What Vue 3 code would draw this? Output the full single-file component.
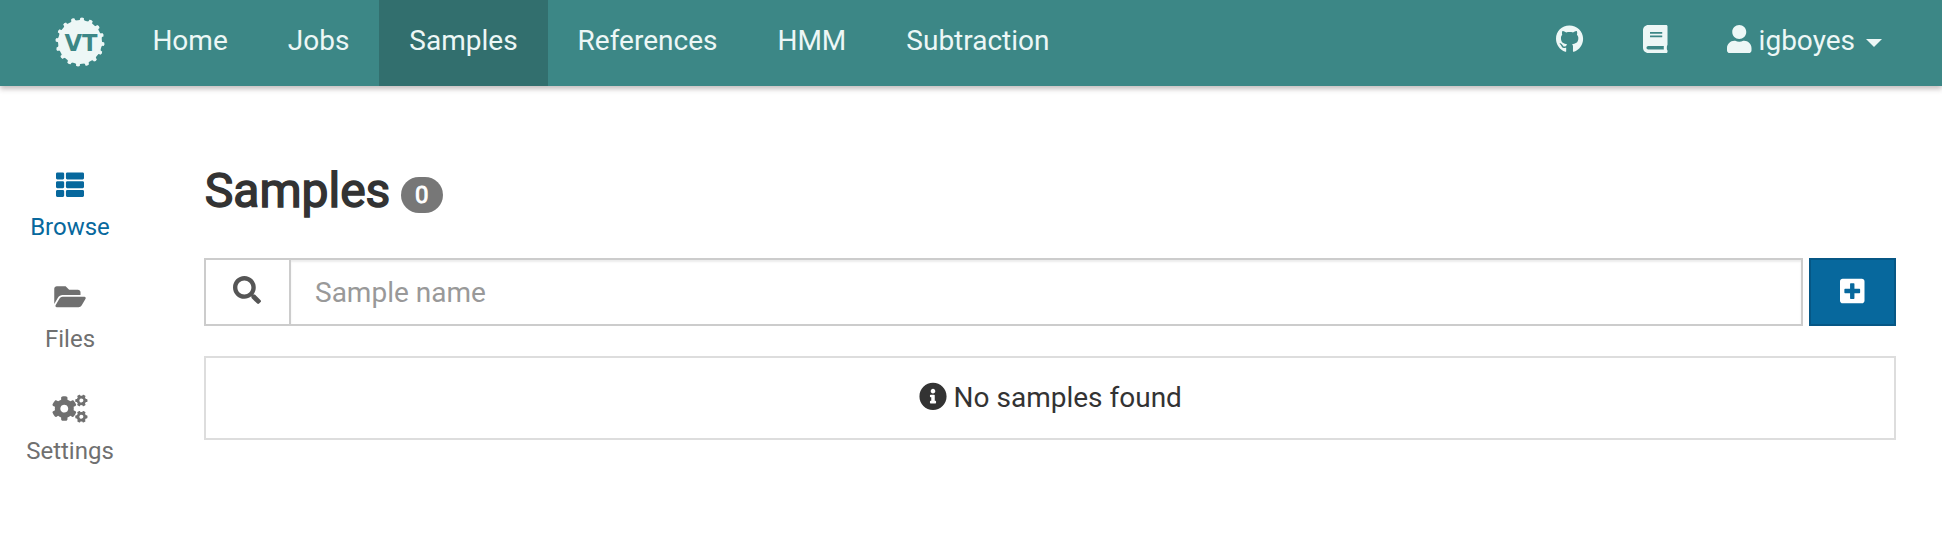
<script setup>
const icons = {
  github: { w: 496, d: ['M165.9 397.4c0 2-2.3 3.6-5.2 3.6-3.3.3-5.6-1.3-5.6-3.6 0-2 2.3-3.6 5.2-3.6 3-.3 5.6 1.3 5.6 3.6zm-31.1-4.5c-.7 2 1.3 4.3 4.3 4.9 2.6 1 5.6 0 6.2-2s-1.3-4.3-4.3-5.2c-2.6-.7-5.5.3-6.2 2.3zm44.2-1.7c-2.9.7-4.9 2.6-4.6 4.9.3 2 2.9 3.3 5.9 2.6 2.9-.7 4.9-2.6 4.6-4.6-.3-1.9-3-3.2-5.9-2.9zM244.8 8C106.1 8 0 113.3 0 252c0 110.9 69.8 205.8 169.5 239.2 12.8 2.3 17.3-5.6 17.3-12.1 0-6.2-.3-40.4-.3-61.4 0 0-70 15-84.7-29.8 0 0-11.4-29.1-27.8-36.6 0 0-22.9-15.7 1.6-15.4 0 0 24.9 2 38.6 25.8 21.9 38.6 58.6 27.5 72.9 20.9 2.3-16 8.8-27.1 16-33.7-55.9-6.2-112.3-14.3-112.3-110.5 0-27.5 7.6-41.3 23.6-58.9-2.6-6.5-11.1-33.3 2.6-67.9 20.9-6.5 69 27 69 27 20-5.6 41.5-8.5 62.8-8.5s42.8 2.9 62.8 8.5c0 0 48.1-33.6 69-27 13.7 34.7 5.2 61.4 2.6 67.9 16 17.7 25.8 31.5 25.8 58.9 0 96.5-58.9 104.2-114.8 110.5 9.2 7.9 17 22.9 17 46.4 0 33.7-.3 75.4-.3 83.6 0 6.5 4.6 14.4 17.3 12.1C428.2 457.8 496 362.9 496 252 496 113.3 383.5 8 244.8 8z'] },
  book: { w: 448, d: ['M448 360V24c0-13.3-10.7-24-24-24H96C43 0 0 43 0 96v320c0 53 43 96 96 96h328c13.3 0 24-10.7 24-24v-16c0-7.5-3.5-14.3-8.9-18.7-4.2-15.4-4.2-59.3 0-74.7 5.4-4.3 8.9-11.1 8.9-18.6zM128 134c0-3.3 2.7-6 6-6h212c3.3 0 6 2.7 6 6v20c0 3.3-2.7 6-6 6H134c-3.3 0-6-2.7-6-6v-20zm0 64c0-3.3 2.7-6 6-6h212c3.3 0 6 2.7 6 6v20c0 3.3-2.7 6-6 6H134c-3.3 0-6-2.7-6-6v-20zm253.4 250H96c-17.7 0-32-14.3-32-32 0-17.6 14.4-32 32-32h285.4c-1.9 17.1-1.9 46.9 0 64z'] },
  user: { w: 448, d: ['M224 256c70.7 0 128-57.3 128-128S294.7 0 224 0 96 57.3 96 128s57.3 128 128 128zm89.6 32h-16.7c-22.2 10.2-46.9 16-72.9 16s-50.6-5.8-72.9-16h-16.7C60.2 288 0 348.2 0 422.4V464c0 26.5 21.5 48 48 48h352c26.5 0 48-21.5 48-48v-41.6c0-74.2-60.2-134.4-134.4-134.4z'] },
  list: { w: 512, d: ['M149.333 216v80c0 13.255-10.745 24-24 24H24c-13.255 0-24-10.745-24-24v-80c0-13.255 10.745-24 24-24h101.333c13.255 0 24 10.745 24 24zM0 376v80c0 13.255 10.745 24 24 24h101.333c13.255 0 24-10.745 24-24v-80c0-13.255-10.745-24-24-24H24c-13.255 0-24 10.745-24 24zM125.333 32H24C10.745 32 0 42.745 0 56v80c0 13.255 10.745 24 24 24h101.333c13.255 0 24-10.745 24-24V56c0-13.255-10.745-24-24-24zm80 448H488c13.255 0 24-10.745 24-24v-80c0-13.255-10.745-24-24-24H205.333c-13.255 0-24 10.745-24 24v80c0 13.255 10.745 24 24 24zm-24-424v80c0 13.255 10.745 24 24 24H488c13.255 0 24-10.745 24-24V56c0-13.255-10.745-24-24-24H205.333c-13.255 0-24 10.745-24 24zm24 264H488c13.255 0 24-10.745 24-24v-80c0-13.255-10.745-24-24-24H205.333c-13.255 0-24 10.745-24 24v80c0 13.255 10.745 24 24 24z'] },
  folder: { w: 576, d: ['M572.694 292.093L500.27 416.248A63.997 63.997 0 0 1 444.989 448H45.025c-18.523 0-30.064-20.093-20.731-36.093l72.424-124.155A64 64 0 0 1 152 256h399.964c18.523 0 30.064 20.093 20.73 36.093zM152 224h328v-48c0-26.51-21.49-48-48-48H272l-64-64H48C21.49 64 0 85.49 0 112v278.046l69.077-118.418C86.214 242.25 117.989 224 152 224z'] },
  cogs: { w: 640, d: [
    'M386.3 286.1l33.7 16.8c10.1 5.8 14.5 18.1 10.5 29.1-8.9 24.2-26.4 46.4-42.6 65.8-7.4 8.9-20.2 11.1-30.3 5.3l-29.1-16.8c-16 13.7-34.6 24.6-54.9 31.7v33.6c0 11.6-8.3 21.6-19.7 23.6-24.6 4.2-50.4 4.4-75.9 0-11.5-2-20-11.9-20-23.6V418c-20.3-7.2-38.9-18-54.9-31.7L74 403c-10 5.8-22.9 3.6-30.3-5.3-16.2-19.4-33.3-41.6-42.2-65.7-4-10.9.4-23.2 10.5-29.1l33.3-16.8c-3.9-20.9-3.9-42.4 0-63.4L12 205.8c-10.1-5.8-14.6-18.1-10.5-29 8.9-24.2 26-46.4 42.2-65.8 7.4-8.9 20.2-11.1 30.3-5.3l29.1 16.8c16-13.7 34.6-24.6 54.9-31.7V57.1c0-11.5 8.2-21.5 19.6-23.5 24.6-4.2 50.5-4.4 76-.1 11.5 2 20 11.9 20 23.6v33.6c20.3 7.2 38.9 18 54.9 31.7l29.1-16.8c10-5.8 22.9-3.6 30.3 5.3 16.2 19.4 33.2 41.6 42.1 65.8 4 10.9.1 23.2-10 29.1l-33.7 16.8c3.9 21 3.9 42.5 0 63.5zm-117.6 21.1c59.2-77-28.7-164.9-105.7-105.7-59.2 77 28.7 164.9 105.7 105.7z',
    'M512.1 191l-8.2 14.3c-3 5.3-9.4 7.5-15.1 5.4-11.8-4.4-22.6-10.7-32.1-18.6-4.6-3.8-5.8-10.5-2.8-15.7l8.2-14.3c-6.9-8-12.3-17.3-15.9-27.4h-16.5c-6 0-11.2-4.3-12.2-10.3-2-12-2.1-24.6 0-37.1 1-6 6.2-10.4 12.2-10.4h16.5c3.6-10.1 9-19.4 15.9-27.4l-8.2-14.3c-3-5.2-1.9-11.9 2.8-15.7 9.5-7.9 20.4-14.2 32.1-18.6 5.7-2.1 12.1.1 15.1 5.4l8.2 14.3c10.5-1.9 21.2-1.9 31.7 0L552 6.3c3-5.3 9.4-7.5 15.1-5.4 11.8 4.4 22.6 10.7 32.1 18.6 4.6 3.8 5.8 10.5 2.8 15.7l-8.2 14.3c6.9 8 12.3 17.3 15.9 27.4h16.5c6 0 11.2 4.3 12.2 10.3 2 12 2.1 24.6 0 37.1-1 6-6.2 10.4-12.2 10.4h-16.5c-3.6 10.1-9 19.4-15.9 27.4l8.2 14.3c3 5.2 1.9 11.9-2.8 15.7-9.5 7.9-20.4 14.2-32.1 18.6-5.7 2.1-12.1-.1-15.1-5.4l-8.2-14.3c-10.4 1.9-21.2 1.9-31.7 0zm-10.5-58.8c38.5 29.6 82.4-14.3 52.8-52.8-38.5-29.7-82.4 14.3-52.8 52.8z',
    'M512.1 489.9l-8.2 14.3c-3 5.3-9.4 7.5-15.1 5.4-11.8-4.4-22.6-10.7-32.1-18.6-4.6-3.8-5.8-10.5-2.8-15.7l8.2-14.3c-6.9-8-12.3-17.3-15.9-27.4h-16.5c-6 0-11.2-4.3-12.2-10.3-2-12-2.1-24.6 0-37.1 1-6 6.2-10.4 12.2-10.4h16.5c3.6-10.1 9-19.4 15.9-27.4l-8.2-14.3c-3-5.2-1.9-11.9 2.8-15.7 9.5-7.9 20.4-14.2 32.1-18.6 5.7-2.1 12.1.1 15.1 5.4l8.2 14.3c10.5-1.9 21.2-1.9 31.7 0l8.2-14.3c3-5.3 9.4-7.5 15.1-5.4 11.8 4.4 22.6 10.7 32.1 18.6 4.6 3.8 5.8 10.5 2.8 15.7l-8.2 14.3c6.9 8 12.3 17.3 15.9 27.4h16.5c6 0 11.2 4.3 12.2 10.3 2 12 2.1 24.6 0 37.1-1 6-6.2 10.4-12.2 10.4h-16.5c-3.6 10.1-9 19.4-15.9 27.4l8.2 14.3c3 5.2 1.9 11.9-2.8 15.7-9.5 7.9-20.4 14.2-32.1 18.6-5.7 2.1-12.1-.1-15.1-5.4l-8.2-14.3c-10.4 1.9-21.2 1.9-31.7 0zm-10.5-58.8c38.5 29.6 82.4-14.3 52.8-52.8-38.5-29.7-82.4 14.3-52.8 52.8z',
  ] },
}

const links = ['Home', 'Jobs', 'Samples', 'References', 'HMM', 'Subtraction']
const side = [
  { label: 'Browse', icon: icons.list },
  { label: 'Files', icon: icons.folder },
  { label: 'Settings', icon: icons.cogs },
]

const teeth = Array.from({ length: 16 }, (_, i) => i * 22.5 + 5)
</script>

<template>
  <div class="page">
    <nav class="navbar">
      <svg class="logo" viewBox="-25 -25 50 50">
        <circle r="22" />
        <path
          v-for="a in teeth"
          :key="a"
          d="M-2.9 -21.2Q-1.5 -22.2 -1.9 -24Q0 -25.3 1.9 -24Q1.5 -22.2 2.9 -21.2z"
          :transform="`rotate(${a})`"
        />
        <text x="-15.6" y="9" textLength="33" lengthAdjust="spacingAndGlyphs">VT</text>
      </svg>
      <a v-for="l in links" :key="l" class="link" :class="{ active: l === 'Samples' }">{{ l }}</a>
      <div class="spacer"></div>
      <a class="link"><svg class="icon github" viewBox="0 0 496 512"><path :d="icons.github.d[0]" /></svg></a>
      <a class="link"><svg class="icon narrow" viewBox="0 0 448 512"><path :d="icons.book.d[0]" /></svg></a>
      <a class="link user">
        <svg class="icon narrow" viewBox="0 0 448 512"><path :d="icons.user.d[0]" /></svg>
        <span class="name">igboyes</span>
        <span class="caret"></span>
      </a>
    </nav>

    <div class="body">
      <aside class="side">
        <a v-for="(s, i) in side" :key="s.label" class="side-item" :class="{ current: i === 0 }">
          <svg class="side-icon" :viewBox="`${s.icon.w / 2 - 329} 6 658 512`">
            <path v-for="d in s.icon.d" :key="d" :d="d" />
          </svg>
          <span>{{ s.label }}</span>
        </a>
      </aside>

      <main class="main">
        <h3 class="title"><span class="title-text">Samples</span><span class="badge">0</span></h3>

        <div class="toolbar">
          <div class="addon">
            <svg class="icon" viewBox="0 0 512 512"><path d="M505 442.7L405.3 343c-4.5-4.5-10.6-7-17-7H372c27.6-35.3 44-79.7 44-128C416 93.1 322.9 0 208 0S0 93.1 0 208s93.1 208 208 208c48.3 0 92.7-16.4 128-44v16.3c0 6.4 2.5 12.5 7 17l99.7 99.7c9.4 9.4 24.6 9.4 33.9 0l28.3-28.3c9.4-9.4 9.4-24.6.1-34zM208 336c-70.7 0-128-57.2-128-128 0-70.7 57.2-128 128-128 70.7 0 128 57.2 128 128 0 70.7-57.2 128-128 128z" /></svg>
          </div>
          <input class="search" type="text" placeholder="Sample name" />
          <button class="create">
            <svg class="icon narrow" viewBox="0 0 448 512"><path d="M400 32H48C21.5 32 0 53.5 0 80v352c0 26.5 21.5 48 48 48h352c26.5 0 48-21.5 48-48V80c0-26.5-21.5-48-48-48zm-32 252c0 6.6-5.4 12-12 12h-92v92c0 6.6-5.4 12-12 12h-56c-6.6 0-12-5.4-12-12v-92H92c-6.6 0-12-5.4-12-12v-56c0-6.6 5.4-12 12-12h92v-92c0-6.6 5.4-12 12-12h56c6.6 0 12 5.4 12 12v92h92c6.6 0 12 5.4 12 12v56z" /></svg>
          </button>
        </div>

        <div class="empty">
          <svg class="icon" viewBox="0 -7 512 512"><path d="M256 8C119.043 8 8 119.083 8 256c0 136.997 111.043 248 248 248s248-111.003 248-248C504 119.083 392.957 8 256 8zm0 110c23.196 0 42 18.804 42 42s-18.804 42-42 42-42-18.804-42-42 18.804-42 42-42zm56 254c0 6.627-5.373 12-12 12h-88c-6.627 0-12-5.373-12-12v-24c0-6.627 5.373-12 12-12h12v-64h-12c-6.627 0-12-5.373-12-12v-24c0-6.627 5.373-12 12-12h64c6.627 0 12 5.373 12 12v100h12c6.627 0 12 5.373 12 12v24z" /></svg>
          <span>No samples found</span>
        </div>
      </main>
    </div>
  </div>
</template>

<style>
body {
  background: #fff;
}
</style>

<style scoped>
.page {
  height: 538px;
  overflow: hidden;
  font-family: Roboto, "Liberation Sans", sans-serif;
  font-size: 28px;
  line-height: 40px;
  color: #333;
}
svg {
  display: block;
  flex: none;
  overflow: visible;
  fill: currentColor;
}
.navbar {
  display: flex;
  height: 86px;
  padding: 0 30px 0 55.4px;
  box-sizing: border-box;
  background: #3c8786;
  color: #edf7f6;
  box-shadow: 0 3px 5px rgba(60, 40, 40, 0.3);
}
.logo {
  width: 50px;
  height: 50px;
  margin: 16.7px 17px 0 0;
}
.logo text {
  font: bold 22.5px "DejaVu Sans", sans-serif;
  fill: #3c8786;
}
.link {
  display: flex;
  height: 86px;
  padding: 21px 30px 0;
  box-sizing: border-box;
}
.active {
  background: #326f6e;
}
.spacer {
  flex: 1;
}
.icon {
  width: 28px;
  height: 28px;
}
.link .icon {
  margin-top: 4.3px;
}
.narrow {
  width: 24.5px;
}
.github {
  width: 27.1px;
}
.name {
  margin-left: 7px;
}
.caret {
  width: 0;
  height: 0;
  margin: 18px 0 0 11px;
  border: 8px solid transparent;
  border-top-color: #edf7f6;
  border-bottom: 0;
}
.body {
  display: flex;
}
.side {
  width: 140px;
  padding-top: 84.5px;
  font-size: 24px;
  line-height: 34px;
  color: #707070;
}
.side-item {
  display: flex;
  flex-direction: column;
  align-items: center;
  height: 112px;
}
.side-icon {
  width: 36px;
  height: 28px;
  margin-bottom: 11.5px;
}
.current {
  color: #07689d;
}
.main {
  flex: 1;
  padding: 77px 46px 0 64px;
}
.title {
  display: flex;
  margin: 0 0 39px;
  height: 56px;
  line-height: 56px;
  font-size: 48px;
  font-weight: 400;
}
.title-text {
  margin-left: 0.8px;
  -webkit-text-stroke: 1.5px #333;
}
.badge {
  width: 42px;
  height: 36px;
  margin: 14px 0 0 10.4px;
  border-radius: 20px;
  background: #777;
  color: #fff;
  font-size: 24px;
  line-height: 36px;
  text-align: center;
  -webkit-text-stroke: 0.9px #fff;
}
.toolbar {
  display: flex;
  height: 68px;
  margin-bottom: 30px;
}
.addon {
  display: flex;
  width: 85px;
  padding: 16px 0 0 27.3px;
  box-sizing: border-box;
  border: 2px solid #ccc;
  border-right: 0;
  color: #555;
}
.search {
  flex: 1;
  min-width: 0;
  margin-right: 6px;
  padding: 2px 24px 0;
  box-sizing: border-box;
  border: 2px solid #ccc;
  border-radius: 0;
  box-shadow: inset 0 2px 2px rgba(0, 0, 0, 0.075);
  background: #fff;
  font: inherit;
  outline: 0;
}
.search::placeholder {
  color: #999;
  opacity: 1;
}
.create {
  display: flex;
  width: 87px;
  padding: 17.2px 0 0 29px;
  box-sizing: border-box;
  border: 2px solid #065785;
  border-radius: 0;
  background: #07689d;
  color: #fff;
}
.empty {
  display: flex;
  justify-content: center;
  gap: 6.5px;
  height: 84px;
  padding: 20px 0 0 1px;
  box-sizing: border-box;
  border: 2px solid #ddd;
}
.empty .icon {
  margin-top: 4.3px;
}
</style>
